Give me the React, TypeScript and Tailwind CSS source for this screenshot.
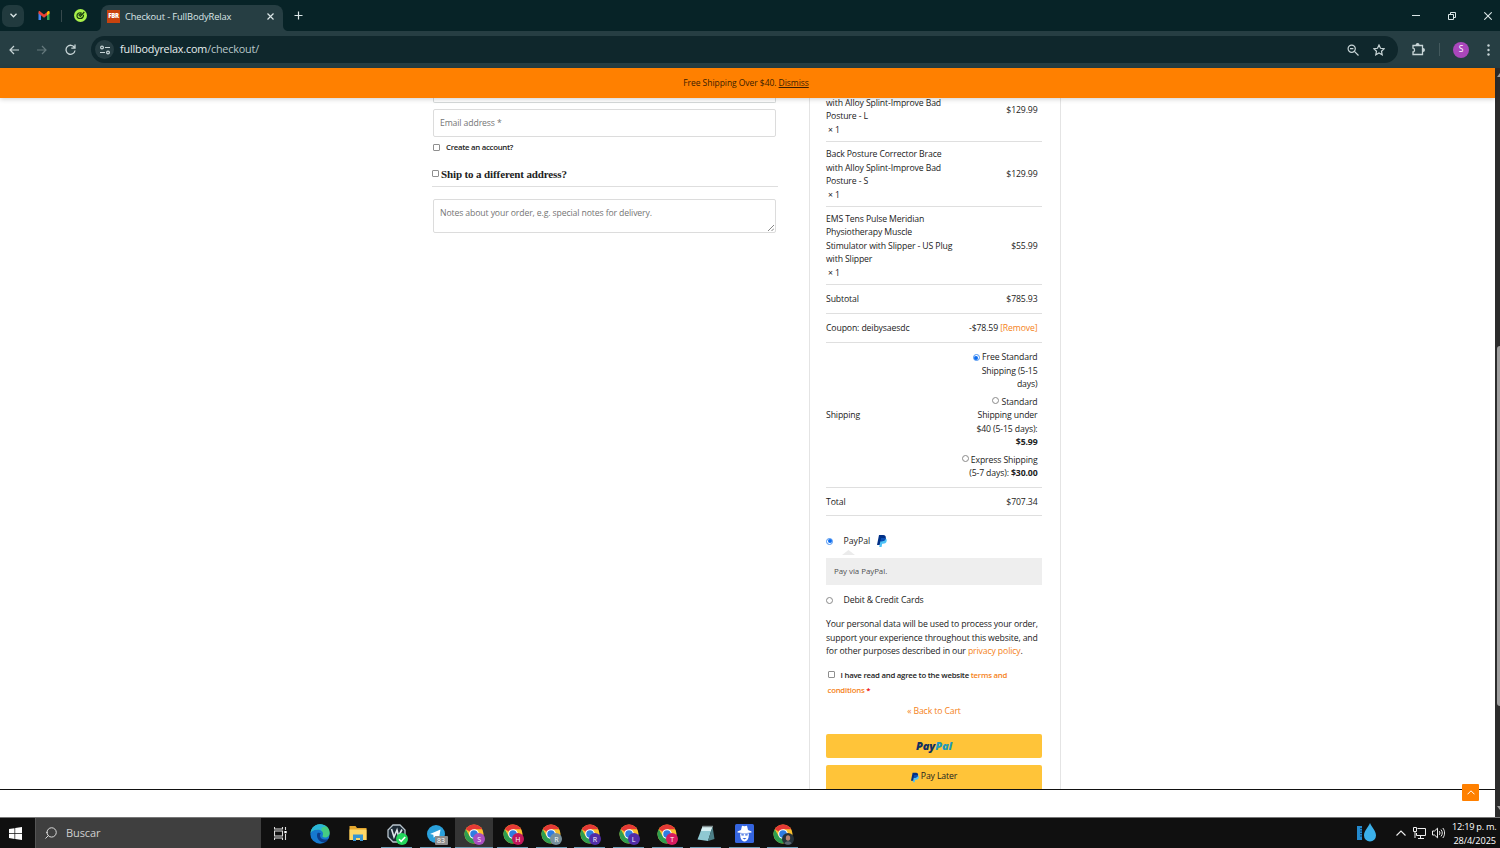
import React from "react";
import { LuSearch } from "react-icons/lu";

interface LineItem {
  lines: string[];
  price: string;
  rowClass: string;
  priceClass?: string;
}

interface ChromeWindow {
  letter: string;
  color: string;
  active?: boolean;
}

const items: LineItem[] = [
  {
    lines: ["with Alloy Splint-Improve Bad", "Posture - L"],
    price: "$129.99",
    rowClass: "h-[46px] items-start pt-[0.500px]",
    priceClass: "mt-[7px]",
  },
  {
    lines: ["Back Posture Corrector Brace", "with Alloy Splint-Improve Bad", "Posture - S"],
    price: "$129.99",
    rowClass: "h-[65px] items-center pt-[2px]",
  },
  {
    lines: [
      "EMS Tens Pulse Meridian",
      "Physiotherapy Muscle",
      "Stimulator with Slipper - US Plug",
      "with Slipper",
    ],
    price: "$55.99",
    rowClass: "h-[78px] items-center pt-[2px]",
  },
];

const chromeWindows: ChromeWindow[] = [
  { letter: "S", color: "bg-[#a94fc0]", active: true },
  { letter: "H", color: "bg-[#c2185b]" },
  { letter: "R", color: "bg-[#78909c]" },
  { letter: "R", color: "bg-[#512da8]" },
  { letter: "L", color: "bg-[#512da8]" },
  { letter: "T", color: "bg-[#d81b60]" },
];

const Radio = ({ checked = false }: { checked?: boolean }) => (
  <span
    className={`inline-flex size-[7px] shrink-0 items-center justify-center rounded-full border align-[0.500px] ${
      checked ? "border-[#4a92f0]" : "border-[#8a8a8a]"
    }`}
  >
    {checked && <span className="size-[4px] rounded-full bg-[#0b6cf0]" />}
  </span>
);

const Checkbox = () => (
  <span className="inline-block size-[7px] shrink-0 rounded-[1px] border border-[#8f8f8f] bg-white" />
);

const PayPalMark = ({ className }: { className: string }) => (
  <svg className={className} viewBox="0 0 20 24">
    <path d="M7 6h9.500c3 1.500 3.500 4 2.700 6.600-1 3.500-3.700 5-7.200 5h-1.700L9.200 24H4.500z" fill="#4fc3f7" />
    <path d="M4 0h8.500c4 0 6 2.500 5 6.500-1 4-4 6-8 6H6.800L5.300 20H0z" fill="#003087" />
    <path d="M8 6h9.600c-.6 4.500-4 6.500-8 6.500H6.800z" fill="#0a4fb5" />
  </svg>
);

const ChromeIcon = () => (
  <svg className="size-[20px]" viewBox="0 0 48 48">
    <circle cx="24" cy="24" r="23" fill="#fbc02d" />
    <path d="M24 24 4.100 12.500A23 23 0 0 1 43.900 12.500H24z" fill="#e53935" />
    <path d="M4.100 12.500A23 23 0 0 0 24 47l10-17.200L14 29.800z" fill="#2e9e4f" />
    <circle cx="24" cy="24" r="11.500" fill="#fff" />
    <circle cx="24" cy="24" r="9" fill="#2f7de1" />
  </svg>
);

const TabStrip = () => (
  <div className="flex h-[31px] bg-[#072327] text-[#dbe6e7]">
    <div className="flex w-[101px] items-center pl-[2px]">
      <div className="flex size-[22px] items-center justify-center rounded-[7px] bg-[#213a3e]">
        <svg className="w-[7px]" viewBox="0 0 7 5" fill="none" stroke="currentColor" strokeWidth="1.300">
          <path d="M.5.8 3.500 3.800 6.500.8" />
        </svg>
      </div>
      <svg className="ml-[14px] h-[9px] w-[12px]" viewBox="0 0 12 9">
        <path d="M.5 9V1.500L3 3v6z" fill="#4285f4" />
        <path d="M11.500 9V1.500L9 3v6z" fill="#34a853" />
        <path d="M.5 2.500V1C.5.2 1.500-.2 2.200.4L6 3.400 9.800.4c.7-.6 1.700-.2 1.700.6v1.500L6 6.800z" fill="#ea4335" />
        <path d="M9 1v3.400l2.500-1.900V1c0-.8-1-1.200-1.700-.6z" fill="#fbbc04" />
      </svg>
      <div className="ml-[11px] h-[12px] w-px bg-[#36494c]" />
      <svg className="ml-[12px] size-[13px]" viewBox="0 0 13 13">
        <circle cx="6.500" cy="6.500" r="6.500" fill="#a8f04a" />
        <path
          d="M10.300 3 6.300 7.500 5 6.200 7.300 4.600M7.700 4.100C5 3 3 4.800 3 6.700c0 2 1.700 2.800 3.300 2.800 2 0 3.300-1.400 3.200-3.700"
          fill="none"
          stroke="#17380f"
          strokeWidth="1.200"
        />
      </svg>
    </div>
    <div className="relative mt-[5px] flex w-[182px] items-center rounded-t-[8px] bg-[#263e43] pb-[4px] pl-[6px]">
      <svg className="absolute bottom-0 -left-[6px] size-[6px]" viewBox="0 0 6 6" fill="#263e43">
        <path d="M6 0v6H0c4 0 6-2 6-6z" />
      </svg>
      <svg className="absolute -right-[6px] bottom-0 size-[6px]" viewBox="0 0 6 6" fill="#263e43">
        <path d="M0 0v6h6C2 6 0 4 0 0z" />
      </svg>
      <div className="flex size-[13px] items-center justify-center bg-[#c8430e] text-[6px] font-extrabold tracking-[-0.300px] text-white">
        FBR
      </div>
      <span className="ml-[5px] w-[135px] pt-px text-[9.300px] tracking-[-0.110px] whitespace-nowrap">
        Checkout - FullBodyRelax
      </span>
      <svg className="ml-[7px] size-[7px]" viewBox="0 0 7 7" stroke="currentColor" strokeWidth="1.200">
        <path d="M.5.5l6 6M6.500.5l-6 6" />
      </svg>
    </div>
    <svg className="mt-[11px] ml-[11px] size-[9px]" viewBox="0 0 9 9" stroke="currentColor" strokeWidth="1.200">
      <path d="M4.500.5v8M.5 4.500h8" />
    </svg>
    <div className="ml-auto flex items-center gap-[28px] pr-[8px]">
      <svg className="size-[8px]" viewBox="0 0 8 8" stroke="currentColor">
        <path d="M0 3.500h8" />
      </svg>
      <svg className="size-[8px]" viewBox="0 0 8 8" fill="none" stroke="currentColor">
        <path d="M.5 2.500h5v5h-5zM2.500 2.500v-2h5v5h-2" />
      </svg>
      <svg className="size-[8px]" viewBox="0 0 8 8" stroke="currentColor" strokeWidth="1.100">
        <path d="M.3.300l7.400 7.400M7.700.300.300 7.700" />
      </svg>
    </div>
  </div>
);

const Toolbar = () => (
  <div className="flex h-[37px] items-center bg-[#263e43] text-[#c8d5d7]">
    <div className="flex w-[91px] items-center gap-[18px] pl-[9px]">
      <svg className="size-[10px]" viewBox="0 0 10 10" fill="none" stroke="currentColor" strokeWidth="1.200">
        <path d="M10 5H1M5 1 1 5l4 4" />
      </svg>
      <svg className="size-[10px] text-[#64787c]" viewBox="0 0 10 10" fill="none" stroke="currentColor" strokeWidth="1.200">
        <path d="M0 5h9M5 1l4 4-4 4" />
      </svg>
      <svg className="size-[11px]" viewBox="0 0 11 11" fill="none" stroke="currentColor" strokeWidth="1.300">
        <path d="M9.500 3.600A4.500 4.500 0 1 0 10 6.500M10 .5v3.600H6.300" />
      </svg>
    </div>
    <div className="flex h-[27px] w-[1307px] items-center rounded-full bg-[#0f272c] pl-[4px]">
      <div className="flex size-[19px] items-center justify-center rounded-full bg-[#263d42]">
        <svg className="size-[10px]" viewBox="0 0 10 10" fill="none" stroke="currentColor" strokeWidth="1.200">
          <circle cx="2" cy="2.500" r="1.400" />
          <path d="M5 2.500h5M0 7.500h5" />
          <circle cx="8" cy="7.500" r="1.400" />
        </svg>
      </div>
      <span className="ml-[6px] text-[10.800px] tracking-[-0.180px] text-[#e6eeee]">
        fullbodyrelax.com<span className="text-[#b9c8ca]">/checkout/</span>
      </span>
      <svg className="ml-auto size-[12px]" viewBox="0 0 12 12" fill="none" stroke="currentColor" strokeWidth="1.200">
        <circle cx="4.700" cy="4.700" r="3.600" />
        <path d="M7.400 7.400 11.500 11.500M3 4.700h3.400" />
      </svg>
      <svg className="mr-[13px] ml-[14px] size-[12px]" viewBox="0 0 12 12" fill="none" stroke="currentColor" strokeWidth="1.200">
        <path d="m6 1 1.500 3.300 3.700.4-2.700 2.500.7 3.600L6 9l-3.200 1.800.7-3.600L.8 4.700l3.700-.4z" />
      </svg>
    </div>
    <svg className="ml-[14px] h-[13px] w-[13px]" viewBox="0 0 13 13" fill="none" stroke="currentColor" strokeWidth="1.300">
      <path d="M1 2.500h9.500v9H1V9c2 0 2-4 0-4z" />
      <path d="M4.300 2a1.300 1.300 0 0 1 2.600 0M11 5.700a1.300 1.300 0 0 1 0 2.600" fill="currentColor" />
    </svg>
    <div className="ml-[14px] h-[13px] w-px bg-[#43595d]" />
    <div className="ml-[13px] flex size-[16px] items-center justify-center rounded-full bg-[#a946bb] text-[8.500px] text-white">
      S
    </div>
    <svg className="ml-[18px] h-[12px] w-[3px]" viewBox="0 0 3 12" fill="currentColor">
      <circle cx="1.500" cy="1.500" r="1.200" />
      <circle cx="1.500" cy="6" r="1.200" />
      <circle cx="1.500" cy="10.500" r="1.200" />
    </svg>
  </div>
);

const BillingForm = () => (
  <section className="w-[346px]">
    <div className="mr-[2px] ml-px h-[5px] rounded-b-[2px] border border-t-0 border-[#d5d9d9]" />
    <div className="mr-[2px] ml-px mt-[6px] flex h-[28px] items-center rounded-[2px] border border-[#dcdcdc] px-[6px] pt-[2px] text-[#757575]">
      Email address *
    </div>
    <label className="mt-[4px] flex h-[13px] items-center gap-[6px] pl-px text-[7.800px] font-semibold tracking-[-0.270px] text-[#222]">
      <Checkbox />
      Create an account?
    </label>
    <h3 className="mt-[13px] flex h-[20px] items-start gap-[2px] border-b border-[#dedede] text-[#222]">
      <span className="flex h-[13px] items-center">
        <Checkbox />
      </span>
      <span className="font-['Liberation_Serif',serif] text-[11px] leading-[14px] font-bold tracking-[-0.120px]">
        Ship to a different address?
      </span>
    </h3>
    <div className="relative mr-[2px] ml-px mt-[12px] h-[34px] rounded-[2px] border border-[#dcdcdc] px-[6px] pt-[7px] leading-[13px] text-[#757575]">
      Notes about your order, e.g. special notes for delivery.
      <svg className="absolute right-px bottom-px size-[6px]" viewBox="0 0 6 6" stroke="#666" strokeWidth=".8">
        <path d="M0 6 6 0M3.500 6 6 3.500" />
      </svg>
    </div>
  </section>
);

const SummaryRow = ({ label, className, children }: { label: string; className: string; children: React.ReactNode }) => (
  <div className={`flex items-center justify-between border-b border-[#dfdfdf] pt-[2px] pr-[4.500px] ${className}`}>
    <span>{label}</span>
    <div className="text-right">{children}</div>
  </div>
);

const OrderReview = () => (
  <section className="ml-[31px] w-[252px] border-x border-[#e4e4e4] pr-[18px] pl-[16px] leading-[13.500px]">
    <div className="-mt-[2px]">
      {items.map((item, i) => (
        <div
          key={i}
          className={`flex justify-between border-b border-[#dfdfdf] pr-[4.500px] ${item.rowClass}`}
        >
          <div className="whitespace-nowrap">
            {item.lines.map((line) => (
              <p key={line}>{line}</p>
            ))}
            <p className="pl-[2px]">× 1</p>
          </div>
          <span className={item.priceClass}>{item.price}</span>
        </div>
      ))}
    </div>
    <SummaryRow label="Subtotal" className="h-[29px]">
      $785.93
    </SummaryRow>
    <SummaryRow label="Coupon: deibysaesdc" className="h-[29px]">
      -$78.59 <a className="text-[#f58220]">[Remove]</a>
    </SummaryRow>
    <SummaryRow label="Shipping" className="h-[145px]">
      <ul className="flex flex-col gap-[4px]">
        <li>
          <Radio checked /> Free Standard
          <br />
          Shipping (5-15
          <br />
          days)
        </li>
        <li>
          <Radio /> Standard
          <br />
          Shipping under
          <br />
          $40 (5-15 days):
          <br />
          <b>$5.99</b>
        </li>
        <li>
          <Radio /> Express Shipping
          <br />
          (5-7 days): <b>$30.00</b>
        </li>
      </ul>
    </SummaryRow>
    <SummaryRow label="Total" className="h-[28px]">
      $707.34
    </SummaryRow>

    <div className="mt-[18px] flex h-[14px] items-center">
      <Radio checked />
      <span className="ml-[10.500px] pt-[2px] tracking-normal">PayPal</span>
      <PayPalMark className="ml-[7px] h-[12px] w-[10px]" />
    </div>
    <svg className="mt-[2px] ml-[16px] block h-[5px] w-[13px]" viewBox="0 0 13 5">
      <path d="M0 5 6.500 0 13 5z" fill="#ebebeb" />
    </svg>
    <div className="mt-[3px] flex h-[27px] items-center bg-[#eee] pl-[8px] text-[7.900px] tracking-[-0.040px] text-[#515151]">
      Pay via PayPal.
    </div>
    <div className="mt-[8px] flex h-[14px] items-center">
      <Radio />
      <span className="ml-[10.500px] pt-[2px]">Debit &amp; Credit Cards</span>
    </div>
    <p className="mt-[11px] whitespace-nowrap">
      Your personal data will be used to process your order,
      <br />
      support your experience throughout this website, and
      <br />
      for other purposes described in our <a className="text-[#f58220]">privacy policy</a>.
    </p>
    <div className="mt-[9px] pl-[1.500px] text-[7.800px] leading-[15px] font-semibold tracking-[-0.240px] whitespace-nowrap">
      <Checkbox />
      <span className="ml-[6px]">I have read and agree to the website </span>
      <a className="text-[#f58220]">terms and</a>
      <br />
      <a className="text-[#f58220]">conditions</a> <span className="text-[#e00]">*</span>
    </div>
    <p className="mt-[7px] text-center text-[#f58220]">« Back to Cart</p>
    <div className="mt-[16px] flex h-[24px] items-center justify-center rounded-[2px] bg-[#ffc439] text-[11px] font-extrabold tracking-[-0.100px] text-[#12305f] italic">
      Pay<span className="text-[#2199bd]">Pal</span>
    </div>
    <div className="mt-[7px] flex h-[24px] items-center justify-center gap-[2px] rounded-t-[2px] bg-[#ffc439]">
      <PayPalMark className="h-[11px] w-[8px]" />
      Pay Later
    </div>
  </section>
);

const Scrollbar = () => (
  <div className="flex w-[5px] flex-col items-end bg-[#2c2c2c]">
    <svg className="mt-[5px] h-[4px] w-[3px]" viewBox="0 0 3 4">
      <path d="M0 4 3 0v4z" fill="#9f9f9f" />
    </svg>
    <div className="mt-[269px] h-[360px] w-[3px] rounded-l-[3px] bg-[#9f9f9f]" />
    <svg className="mt-auto mb-[7px] h-[4px] w-[3px]" viewBox="0 0 3 4">
      <path d="M0 0h3v4z" fill="#9f9f9f" />
    </svg>
  </div>
);

const TaskbarItem = ({ open, active, children }: { open?: boolean; active?: boolean; children: React.ReactNode }) => (
  <div className={`flex h-[30px] w-[38.600px] flex-col items-center ${active ? "bg-[#353535]" : ""}`}>
    <div className="relative mt-[5px] flex h-[21px] items-center justify-center">{children}</div>
    {open && <div className={`mt-auto h-px bg-[#6f9fb8] ${active ? "w-full" : "w-[31px]"}`} />}
  </div>
);

const Taskbar = () => (
  <footer className="flex h-[31px] items-center border-t border-[#777] bg-[#101010] text-white">
    <div className="flex w-[35px] justify-center pr-[4px]">
      <svg className="size-[13px]" viewBox="0 0 13 13" fill="#fff">
        <path d="M0 2 5.500 1.200v5H0zM6.200 1.100 13 0v6.200H6.200zM0 6.900h5.500v5L0 11.100zM6.200 6.900H13V13l-6.800-1z" />
      </svg>
    </div>
    <div className="flex h-full w-[226px] items-center border-l border-[#555] bg-[#3f3f3f] pl-[8px]">
      <LuSearch className="size-[14px] -scale-x-100 text-[#ddd]" strokeWidth={1.700} />
      <span className="ml-[8px] pt-px text-[11px] tracking-[-0.100px] text-[#cfcfcf]">Buscar</span>
    </div>
    <div className="flex w-[39.500px] justify-center">
      <svg className="size-[13px]" viewBox="0 0 13 13" fill="none" stroke="#ddd" strokeWidth="1.100">
        <path d="M.5 0v2h8V0M.5 4h8v5h-8zM.5 13v-2h8v2M11.500 0v3M11.500 7v6" />
        <path d="M10.300 4h2.400v2.200h-2.400z" fill="#fff" stroke="none" />
      </svg>
    </div>
    <TaskbarItem>
      <svg className="size-[20px]" viewBox="0 0 20 20">
        <circle cx="10" cy="10" r="9.700" fill="#1679cf" />
        <path d="M.5 9C1.500 3 6 .3 10 .3c6 0 9.700 4 9.700 8.200 0 3-2 5-4.700 5-2 0-3-.8-2.300-2C14 8 11 5.500 8 5.500 4 5.500 1.500 7 .5 9z" fill="#45cc83" />
        <path d="M.5 9C1.500 3 6 .3 10 .3c2.500 0 5 1 6.500 2.500C12 2 10 4 12.500 8.500 11 6 9.500 5.500 8 5.500 4 5.500 1.500 7 .5 9z" fill="#2ab5d8" />
        <path d="M7.500 9c-2 4.500 2 9.700 7.500 9.500 1.500-1 2.500-2 3-3.500-4 1.500-8 0-8-3.500 0-1 .3-1.500.8-2-1-1-2.300-1-3.300-.5z" fill="#0c3e8c" />
      </svg>
    </TaskbarItem>
    <TaskbarItem>
      <svg className="h-[15px] w-[18px]" viewBox="0 0 18 15">
        <path d="M.5 0h6l1.500 2h9.500v12H.5z" fill="#e3a62e" />
        <path d="M.5 3.500h17V14H.5z" fill="#ffd868" />
        <path d="M4 15V8.500h10V15h-3v-3H7v3z" fill="#3a96d2" />
      </svg>
    </TaskbarItem>
    <TaskbarItem open>
      <svg className="size-[19px]" viewBox="0 0 19 19" fill="none">
        <path d="M6 1h7l5 5v7l-5 5H6l-5-5V6z" fill="#1d2a35" stroke="#b8c4cc" strokeWidth="1.300" />
        <path d="M4.500 5 7 13l3-7 1.500 6L15 5.500" stroke="#dfe7ec" strokeWidth="1.600" />
      </svg>
      <svg className="absolute -right-[2px] -bottom-px size-[12px]" viewBox="0 0 12 12" fill="none">
        <circle cx="6" cy="6" r="6" fill="#22d65b" />
        <path d="m3 6.200 2.200 2.200L9.200 4" stroke="#fff" strokeWidth="1.600" />
      </svg>
    </TaskbarItem>
    <TaskbarItem open>
      <svg className="size-[18px]" viewBox="0 0 18 18">
        <circle cx="9" cy="9" r="9" fill="#2aa1dc" />
        <path d="m3 9 10.500-4.500L12 13.500 8.500 11l-1.800 1.700-.4-3z" fill="#fff" />
      </svg>
      <span className="absolute -right-[3px] -bottom-[1px] flex h-[9px] w-[13px] items-center justify-center rounded-[1px] bg-[#8c8c8c] text-[7px] leading-none">
        83
      </span>
    </TaskbarItem>
    {chromeWindows.map((win, i) => (
      <TaskbarItem key={i} open active={win.active}>
        <ChromeIcon />
        <span
          className={`absolute -right-[1px] -bottom-px flex size-[12px] items-center justify-center rounded-full text-[7px] leading-none ${win.color}`}
        >
          {win.letter}
        </span>
      </TaskbarItem>
    ))}
    <TaskbarItem open>
      <svg className="h-[18px] w-[18px]" viewBox="0 0 18 18">
        <path d="M5.500 1.500h10L11 16 .5 14.500z" fill="#8fc8d2" />
        <path d="M5.500 1.500h10L14 6 4 6z" fill="#d8f0f3" />
        <path d="m15.500 1.500 2 12.500-6.500 2z" fill="#4d8088" />
        <path d="M5.500.8h10.500v1.400H5.200z" fill="#7d8a8c" />
      </svg>
    </TaskbarItem>
    <TaskbarItem open>
      <svg className="size-[19px]" viewBox="0 0 19 19">
        <rect width="19" height="19" rx="1.500" fill="#3565df" />
        <path d="M6 6 7 1.700l2.500.6 2.500-.6 1 4.300 3.500 1.500v1l-7 .8-7-.8v-1z" fill="#fff" />
        <path d="M5 9.500h9l-.5 4c-.6 2.500-2.500 4-4 4s-3.400-1.500-4-4z" fill="#fff" />
        <path d="M6.200 10.300h2.600v1.300H6.600zM10.200 10.300h2.600l-.4 1.300h-2.200zM7.500 14h4l-2 1.500z" fill="#3565df" />
      </svg>
    </TaskbarItem>
    <TaskbarItem open>
      <ChromeIcon />
      <svg className="absolute -right-[1px] -bottom-px size-[12px]" viewBox="0 0 12 12">
        <circle cx="6" cy="6" r="6" fill="#26323a" />
        <ellipse cx="6" cy="5" rx="2.200" ry="2.800" fill="#b98270" />
        <path d="M2.500 10.500c1-3 6-3 7 0a6 6 0 0 1-7 0z" fill="#5a6670" />
      </svg>
    </TaskbarItem>

    <div className="ml-auto flex items-center pr-[4px]">
      <svg className="h-[20px] w-[20px]" viewBox="0 0 20 20">
        <path d="M0 3h5v14H0z" fill="#2389cd" />
        <path d="M3 5.500h2M3 8h2M3 10.500h2M3 13h2" stroke="#0b3d66" />
        <path d="M13 0c2 4.500 6 8 6 12.500a6 6 0 0 1-12 0C7 8 11 4.500 13 0z" fill="#3bb0ea" />
      </svg>
      <svg className="ml-[19px] h-[6px] w-[10px]" viewBox="0 0 10 6" fill="none" stroke="#eee" strokeWidth="1.100">
        <path d="M.5 5.500 5 1l4.500 4.500" />
      </svg>
      <svg className="ml-[7px] h-[12px] w-[13px]" viewBox="0 0 13 12" fill="none" stroke="#eee">
        <path d="M4.500 1.500h8v7h-9V6M7.500 8.500V11M5 11.500h6M.5.500h3v4h-3zM2 4.500v6.500" />
      </svg>
      <svg className="ml-[6px] h-[12px] w-[13px]" viewBox="0 0 13 12" fill="none" stroke="#eee">
        <path d="M.5 4h2L5.500 1.200v9.600L2.500 8h-2zM7.300 4.200c.8 1 .8 2.600 0 3.600M9 2.600c1.700 2 1.700 4.800 0 6.800M10.800 1c2.400 3 2.400 7 0 10" />
      </svg>
      <div className="ml-[7px] w-[44px] pt-px text-right text-[9.200px] leading-[14px] tracking-[-0.250px] whitespace-nowrap">
        <p>12:19 p. m.</p>
        <p className="tracking-[-0.100px]">28/4/2025</p>
      </div>
    </div>
  </footer>
);

export default function App() {
  return (
    <div className="flex h-[848px] w-[1500px] flex-col overflow-hidden bg-white font-['Open_Sans','Noto_Sans',sans-serif]">
      <TabStrip />
      <Toolbar />
      <div className="flex h-[749px]">
        <div className="relative flex w-[1495px] flex-col text-[8.700px] tracking-[-0.130px] text-[#222]">
          <div className="z-10 flex h-[30px] shrink-0 items-center justify-center bg-[#ff8000] pt-px text-[8.500px] tracking-[-0.050px] text-[#3b1d00] shadow-[0_1px_5px_rgba(0,0,0,0.2)]">
            <p className="pr-[3px]">
              Free Shipping Over $40. <a className="underline">Dismiss</a>
            </p>
          </div>
          <main className="flex h-[691px] pl-[432px]">
            <BillingForm />
            <OrderReview />
          </main>
          <div className="h-[28px] border-t border-[#111]" />
          <button className="absolute right-[16px] bottom-[16px] flex size-[17px] items-center justify-center rounded-[1px] bg-[#ff8000]">
            <svg className="h-[5px] w-[8px]" viewBox="0 0 8 5" fill="none" stroke="#fff">
              <path d="M.5 4.300 4 .8l3.500 3.500" />
            </svg>
          </button>
        </div>
        <Scrollbar />
      </div>
      <Taskbar />
    </div>
  );
}
